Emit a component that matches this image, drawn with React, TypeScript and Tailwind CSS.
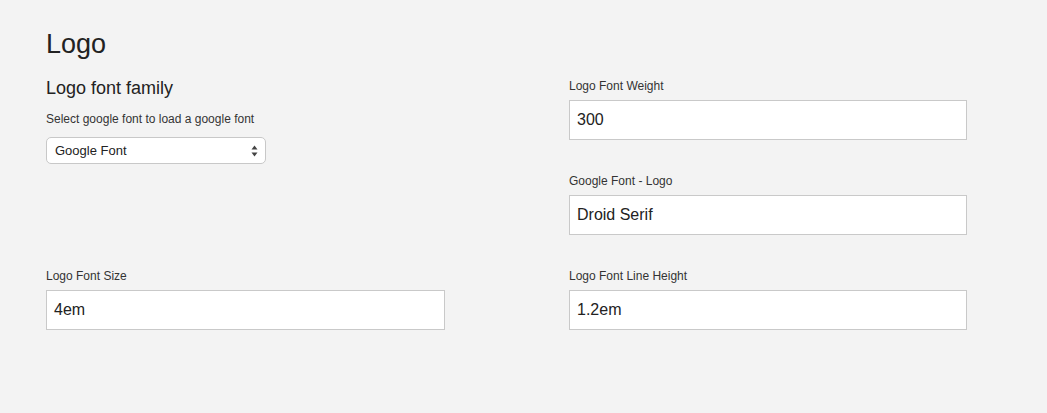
import React from "react";

const font = { fontFamily: '"Liberation Sans", Arial, Helvetica, sans-serif' };

function Field({ label, value, wide }: { label: string; value: string; wide?: boolean }) {
  return (
    <div className="flex flex-col">
      <label className="block text-[12px] leading-[17px] text-[#333] mb-[5px]">{label}</label>
      <div
        className={
          (wide ? "w-[399px]" : "w-[398px]") +
          " h-[40px] bg-white border border-[#c9c9c9] flex items-center px-[7px] text-[16px] text-[#222]"
        }
      >
        {value}
      </div>
    </div>
  );
}

export default function App() {
  return (
    <div className="w-[1047px] h-[413px] bg-[#f3f3f3] text-[#333] pl-[46px] pt-[29px]" style={font}>
      <h1 className="text-[27px] leading-[30px] text-[#222] m-0">Logo</h1>
      <div className="grid grid-cols-[523px_1fr] mt-[19px]">
        <div className="flex flex-col">
          <h3 className="text-[18px] leading-[20px] text-[#222] m-0">Logo font family</h3>
          <p className="text-[12px] leading-[17px] mt-[13px]">Select google font to load a google font</p>
          <div className="mt-[9px] w-[220px] h-[27px] bg-white border border-[#c8c8c8] rounded-[5px] flex items-center justify-between pl-[8px] pr-[7px] text-[13px] text-[#222]">
            <span>Google Font</span>
            <svg width="7" height="12" viewBox="0 0 7 12">
              <path d="M3.5 0.5 L6.5 4.5 L0.5 4.5 Z" fill="#444" />
              <path d="M3.5 11.5 L6.5 7.5 L0.5 7.5 Z" fill="#444" />
            </svg>
          </div>
        </div>
        <div className="flex flex-col gap-[33px]">
          <Field label="Logo Font Weight" value="300" />
          <Field label="Google Font - Logo" value="Droid Serif" />
        </div>
        <div className="mt-[33px]">
          <Field label="Logo Font Size" value="4em" wide />
        </div>
        <div className="mt-[33px]">
          <Field label="Logo Font Line Height" value="1.2em" />
        </div>
      </div>
    </div>
  );
}
